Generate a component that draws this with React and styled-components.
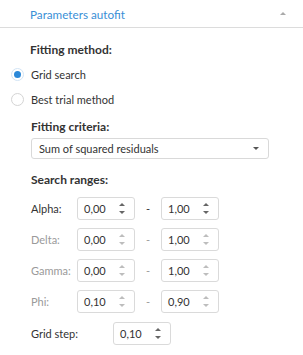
import React from "react";
import styled, { createGlobalStyle } from "styled-components";

const Global = createGlobalStyle`
  html, body { margin: 0; padding: 0; background: #fff; }
  body { font-family: Lato, "Open Sans", sans-serif; font-size: 11px; color: #333; }
`;

const Panel = styled.div`
  width: 303px;
  height: 355px;
  background: #fff;
`;

const Header = styled.div`
  height: 28px;
  border-bottom: 1px solid #dcdcdc;
  display: flex;
  align-items: center;
  justify-content: space-between;
  padding: 0 17px 0 30px;
  box-sizing: border-box;
`;

const HeaderTitle = styled.span`
  color: #3a8fd6;
  font-size: 11.7px;
`;

const Caret = styled.span`
  width: 0;
  height: 0;
  border-left: 3px solid transparent;
  border-right: 3px solid transparent;
  border-${(p) => (p.$up ? "bottom" : "top")}: 3px solid ${(p) => p.$color || "#aaa"};
  display: block;
`;

const Body = styled.div`
  padding: 14px 0 0 0;
  display: flex;
  flex-direction: column;
`;

const SectionTitle = styled.div`
  font-weight: bold;
  font-size: 12px;
  padding-left: ${(p) => (p.$inset ? 0 : 30)}px;
  margin-top: ${(p) => p.$mt || 0}px;
  height: 16px;
  line-height: 16px;
`;

const RadioRow = styled.label`
  display: flex;
  align-items: center;
  gap: 7px;
  padding-left: 11px;
  height: 18px;
  margin-top: ${(p) => p.$mt || 0}px;
`;

const RadioDot = styled.span`
  width: 13px;
  height: 13px;
  border-radius: 50%;
  box-sizing: border-box;
  border: 1px solid ${(p) => (p.$checked ? "#d2e4f5" : "#d4d4d4")};
  display: flex;
  align-items: center;
  justify-content: center;
  &::after {
    content: "";
    width: 7px;
    height: 7px;
    border-radius: 50%;
    background: ${(p) => (p.$checked ? "#2b88d8" : "transparent")};
  }
`;

const Indented = styled.div`
  padding-left: 31px;
  display: flex;
  flex-direction: column;
`;

const Select = styled.div`
  width: 238px;
  height: 21px;
  box-sizing: border-box;
  border: 1px solid #d9d9d9;
  border-radius: 3px;
  display: flex;
  align-items: center;
  justify-content: space-between;
  padding: 0 9px 0 7px;
  margin-top: 3px;
`;

const DropCaret = styled.span`
  width: 0;
  height: 0;
  border-left: 3px solid transparent;
  border-right: 3px solid transparent;
  border-top: 3px solid #555;
`;

const Row = styled.div`
  display: flex;
  align-items: center;
  height: 23px;
  margin-top: ${(p) => p.$mt || 0}px;
  color: ${(p) => (p.$disabled ? "#9a9a9a" : "#333")};
`;

const Label = styled.span`
  width: ${(p) => p.$w}px;
  flex: none;
`;

const Spin = styled.div`
  width: 58px;
  height: 23px;
  box-sizing: border-box;
  border: 1px solid #dadada;
  border-radius: 3px;
  display: flex;
  align-items: center;
  justify-content: space-between;
  padding: 0 9px 0 6px;
  color: #333;
  flex: none;
`;

const Arrows = styled.div`
  display: flex;
  flex-direction: column;
  gap: 5px;
`;

const Dash = styled.span`
  width: 26px;
  text-align: center;
  flex: none;
`;

function Spinner({ value, disabled }) {
  const c = disabled ? "#bdbdbd" : "#666";
  return (
    <Spin>
      <span>{value}</span>
      <Arrows>
        <Caret $up $color={c} />
        <Caret $color={c} />
      </Arrows>
    </Spin>
  );
}

function RangeRow({ label, from, to, disabled, mt }) {
  return (
    <Row $disabled={disabled} $mt={mt}>
      <Label $w={46}>{label}</Label>
      <Spinner value={from} disabled={disabled} />
      <Dash>-</Dash>
      <Spinner value={to} disabled={disabled} />
    </Row>
  );
}

export default function App() {
  return (
    <Panel>
      <Global />
      <Header>
        <HeaderTitle>Parameters autofit</HeaderTitle>
        <Caret $up $color="#aaa" />
      </Header>
      <Body>
        <SectionTitle>Fitting method:</SectionTitle>
        <RadioRow $mt={7}>
          <RadioDot $checked />
          <span>Grid search</span>
        </RadioRow>
        <RadioRow $mt={7}>
          <RadioDot />
          <span>Best trial method</span>
        </RadioRow>
        <Indented>
          <SectionTitle $inset $mt={11}>Fitting criteria:</SectionTitle>
          <Select>
            <span>Sum of squared residuals</span>
            <DropCaret />
          </Select>
          <SectionTitle $inset $mt={13}>Search ranges:</SectionTitle>
          <RangeRow label="Alpha:" from="0,00" to="1,00" mt={9} />
          <RangeRow label="Delta:" from="0,00" to="1,00" disabled mt={8} />
          <RangeRow label="Gamma:" from="0,00" to="1,00" disabled mt={8} />
          <RangeRow label="Phi:" from="0,10" to="0,90" disabled mt={8} />
          <Row $mt={9}>
            <Label $w={82}>Grid step:</Label>
            <Spinner value="0,10" />
          </Row>
        </Indented>
      </Body>
    </Panel>
  );
}
